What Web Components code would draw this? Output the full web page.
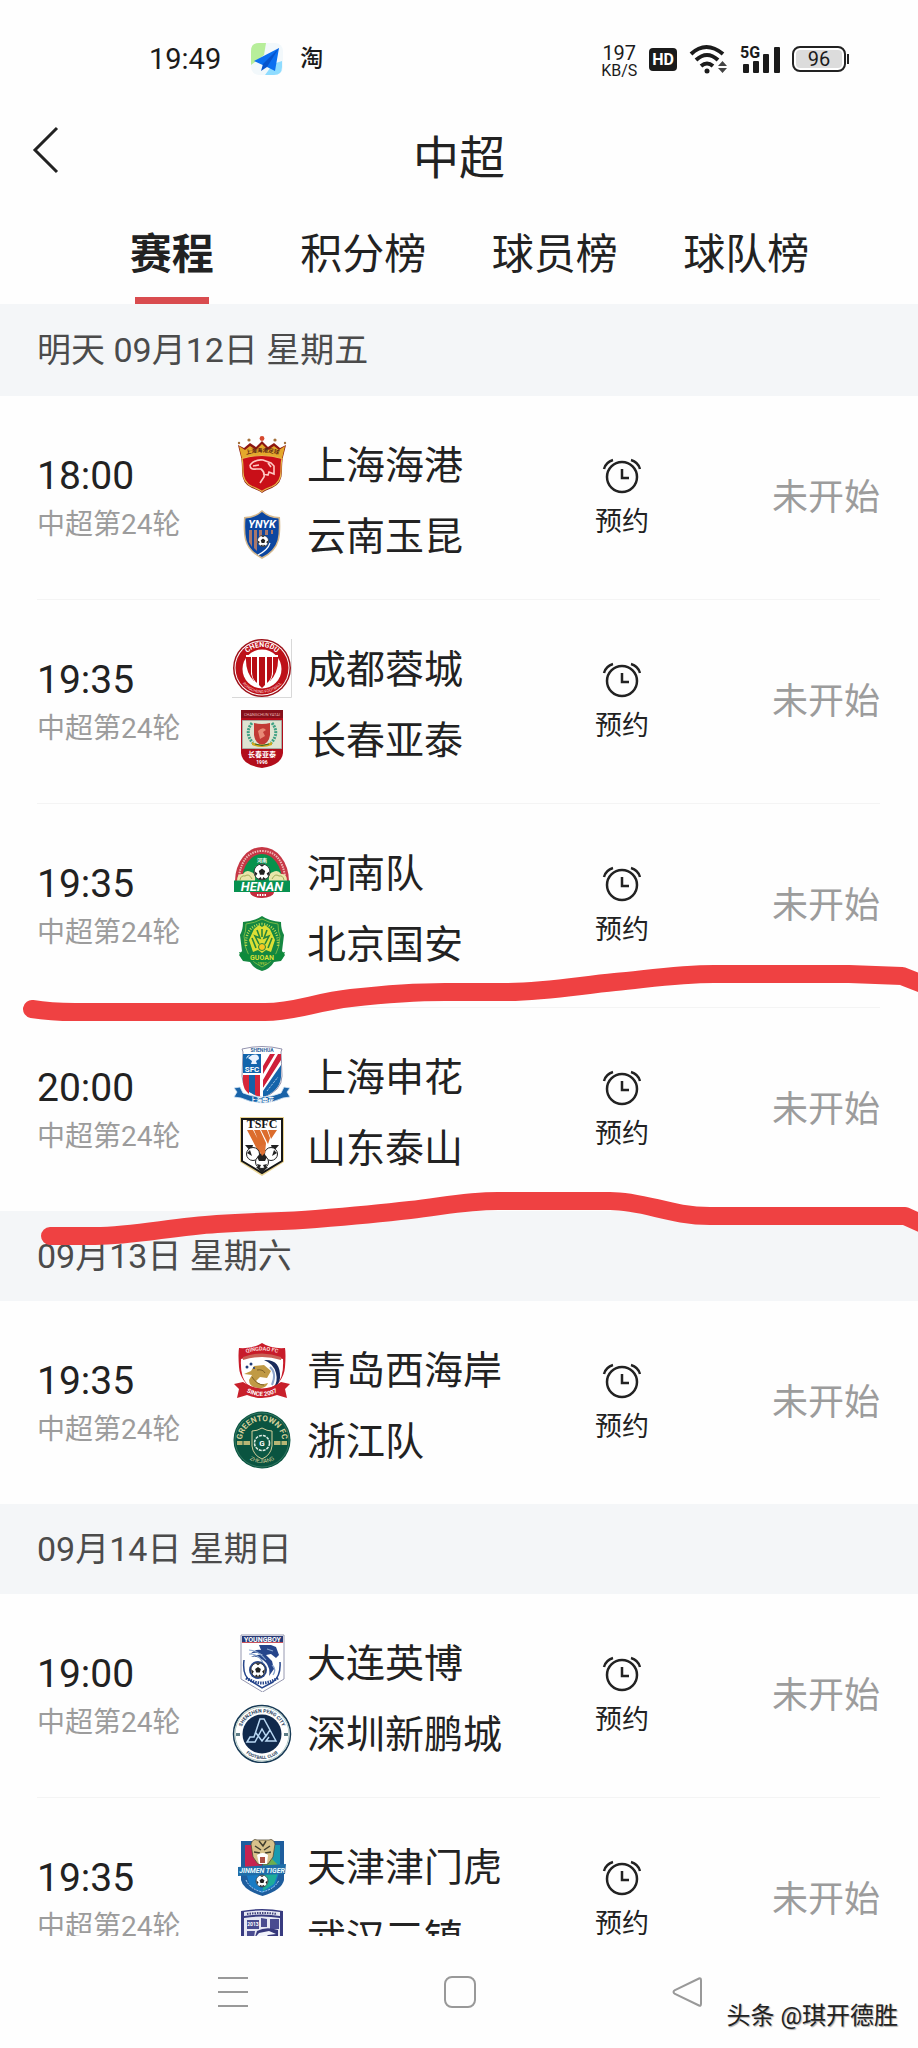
<!DOCTYPE html>
<html lang="zh-CN">
<head>
<meta charset="utf-8">
<meta name="viewport" content="width=device-width, initial-scale=1">
<title>中超</title>
<style>
  body {
    margin: 0;
    background: #fefefe;
    color: #222;
    font-family: Roboto, "Noto Sans CJK SC", sans-serif;
  }
</style>
</head>
<body>
<league-screen>
  <status-bar slot="top" time="19:49" speed="197" battery="96"></status-bar>
  <page-header slot="top">中超</page-header>
  <tab-bar slot="top">
    <tab-item active>赛程</tab-item>
    <tab-item>积分榜</tab-item>
    <tab-item>球员榜</tab-item>
    <tab-item>球队榜</tab-item>
  </tab-bar>

  <match-day date="明天 09月12日 星期五" next>
    <match-row time="18:00" round="中超第24轮">
      <team-line crest="haigang">上海海港</team-line>
      <team-line crest="yukun">云南玉昆</team-line>
    </match-row>
    <match-row time="19:35" round="中超第24轮">
      <team-line crest="chengdu">成都蓉城</team-line>
      <team-line crest="yatai">长春亚泰</team-line>
    </match-row>
    <match-row time="19:35" round="中超第24轮">
      <team-line crest="henan">河南队</team-line>
      <team-line crest="guoan">北京国安</team-line>
    </match-row>
    <match-row time="20:00" round="中超第24轮">
      <team-line crest="shenhua">上海申花</team-line>
      <team-line crest="taishan">山东泰山</team-line>
    </match-row>
  </match-day>
  <match-day date="09月13日 星期六">
    <match-row time="19:35" round="中超第24轮">
      <team-line crest="qingdao">青岛西海岸</team-line>
      <team-line crest="zhejiang">浙江队</team-line>
    </match-row>
  </match-day>
  <match-day date="09月14日 星期日">
    <match-row time="19:00" round="中超第24轮">
      <team-line crest="dalian">大连英博</team-line>
      <team-line crest="shenzhen">深圳新鹏城</team-line>
    </match-row>
    <match-row time="19:35" round="中超第24轮">
      <team-line crest="tianjin">天津津门虎</team-line>
      <team-line crest="wuhan">武汉三镇</team-line>
    </match-row>
  </match-day>

  <nav-bar slot="bottom">头条 @琪开德胜</nav-bar>
  <pen-marks slot="over"></pen-marks>
</league-screen>

<script>
// club crests, all on a 60x60 grid
const BALL = `<circle r="8" fill="#fff" stroke="#222" stroke-width=".8"/>
  <path d="M0-3.4 3.2-1 2 2.8H-2L-3.2-1ZM-3-7.4H3L0-5.2ZM7.8-1 6.4 4.4 4.6 1.6ZM-7.8-1-6.4 4.4-4.6 1.6ZM-4 7-1.2 5 0 8ZM4 7 1.2 5 0 8Z" fill="#222"/>`;

const CRESTS = {
  haigang: `
    <circle cx="30" cy="4.500" r="2.400" fill="#d6492f"/>
    <g fill="#a3703a"><circle cx="17" cy="6" r="1.600"/><circle cx="43" cy="6" r="1.600"/><circle cx="7" cy="9" r="1.200"/><circle cx="53" cy="9" r="1.200"/></g>
    <path d="M6 11l6 3 6-5 6 4 6-6 6 6 6-4 6 5 6-3-3 12q-1 5-1 14 0 13-10 17-8 3-10 5-2-2-10-5-10-4-10-17 0-9-1-14z" fill="#8c1712"/>
    <path d="M7 12l6 4 5-4 6 4 6-6 6 6 6-4 5 4 6-4-3 13Q30 18 10 25z" fill="#e4a92c"/>
    <path d="M10 24.500Q30 18.500 50 24.500q-1 4-1 13 0 11-9 15-8 3-10 5-2-2-10-5-9-4-9-15 0-9-1-13z" fill="#c90f18" stroke="#e5b84c" stroke-width="1.200"/>
    <path id="h" d="M11 21.500Q30 15 50 21.500" fill="none"/>
    <text font-size="5.500" font-weight="700" fill="#5c2410" text-anchor="middle"><textPath href="#h" startOffset="50%">上海海港足球</textPath></text>
    <path d="M18 31q5-6 13-5l8 3 3 3v8l-5-2-1 3-5-1M18 31q0 5 6 4h5q4 3 3 8l-4 6M21 32l6-1M36 29l3 4" fill="none" stroke="#ffc9c4" stroke-width="1.600"/>`,
  yukun: `
    <path d="M30 5q7 7 18 7 1 15-1 23-3 12-17 19-14-7-17-19-2-8-1-23 11 0 18-7z" fill="#d5b88c"/>
    <path d="M30 7q7 6 16.500 6.500 1 14-1 21.500-3 11-15.500 17-12.500-6-15.500-17-2-7.500-1-21.500Q23 13 30 7z" fill="#0c46a0"/>
    <path d="M17 25h3v17l-3-5zM22 25h3v21l-3-3zM27 25h3v9h-3zM33 25h3v5h-3zM39 25h2v4h-2z" fill="#a9786b"/>
    <text x="30" y="23" font-size="11" font-weight="700" font-style="italic" fill="#fff" text-anchor="middle">YNYK</text>
    <g transform="translate(31 36) scale(.7)">${BALL}</g>
    <path d="M38 38q-2 7-12 12" stroke="#fff" stroke-width="1.200" fill="none"/>`,
  chengdu: `
    <path d="M59.500 1V59.500H0" fill="none" stroke="#d8d8d8"/>
    <circle cx="30" cy="30" r="29" fill="#9c1018"/><circle cx="30" cy="30" r="27.500" fill="#fff"/><circle cx="30" cy="30" r="26.500" fill="#bd1119"/>
    <circle cx="30" cy="31" r="19.500" fill="#fff"/>
    <path d="M14 18q-1 16 8 25V18zM46 18q1 16-8 25V18z" fill="#bd1119"/>
    <path d="M19 17h22v19q-2 9-11 13-9-4-11-13z" fill="#fff"/>
    <path d="M20 17h5v28q-5-4-5-11zM27 17h6v30l-3 3-3-3zM35 17h5v17q0 7-5 11z" fill="#b80d15"/>
    <path d="M14 18h32" stroke="#fff" stroke-width="2"/>
    <path id="c" d="M9 30A21 21 0 0 1 51 30" fill="none"/><path id="d" d="M5 30A25 25 0 0 0 55 30" fill="none"/>
    <text font-size="7" font-weight="700" fill="#fff" text-anchor="middle"><textPath href="#c" startOffset="50%">CHENGDU</textPath></text>
    <text font-size="4" fill="#ffd9d9" text-anchor="middle"><textPath href="#d" startOffset="50%">RONGCHENG FOOTBALL</textPath></text>`,
  yatai: `
    <path d="M9 1h42v43q-1 12-21 15Q10 56 9 44z" fill="#b20d1b"/>
    <path d="M9 1h42v8H9z" fill="#85101b"/>
    <text x="30" y="6.500" font-size="4" fill="#eab4b4" text-anchor="middle">CHANGCHUN YATAI</text>
    <path d="M10.500 11.500h39v28h-39z" fill="#dfe4d2" stroke="#a9aaa2"/>
    <path d="M22 14q8 2 16 0v12q-1 8-8 10-7-2-8-10z" fill="#c23a35"/>
    <path d="M26 22q5-5 8-1l-3 2 2 4-5 3" fill="#e88a76"/>
    <path d="M20 14q-8 10 1 20M40 14q8 10-1 20" fill="none" stroke="#3fa184" stroke-width="3" stroke-dasharray="2 1"/>
    <path d="M20 33q10 5 20 0v3q-10 4-20 0z" fill="#cda91d"/><path d="M23 35q7 3 14 0" stroke="#35632d" fill="none"/>
    <text x="30" y="47.500" font-size="7" font-weight="700" fill="#fff" text-anchor="middle">长春亚泰</text>
    <text x="30" y="54.500" font-size="5" font-weight="700" fill="#fff" text-anchor="middle">1996</text>`,
  henan: `
    <ellipse cx="30" cy="50" rx="12" ry="6" fill="#c52b3c"/>
    <path d="M3 39a27 34 0 0 1 54 0z" fill="#c63745"/>
    <path d="M10 39a20 27 0 0 1 40 0z" fill="#07924c"/>
    <path d="M7 34q4-25 23-25t23 25" fill="none" stroke="#efb6b6" stroke-width="2" stroke-dasharray="1.5 1"/>
    <text x="30" y="20" font-size="5" font-weight="700" fill="#fff" text-anchor="middle">河南</text>
    <path d="M5 39q0-8 6-7 3-5 8-2 5 1 4 9zM55 39q0-8-6-7-3-5-8-2-5 1-4 9z" fill="#e9e6aa"/>
    <path d="M8 38q1-5 5-4 4-3 7 3M52 38q-1-5-5-4-4-3-7 3" fill="none" stroke="#a0ab57"/>
    <g transform="translate(30 30)">${BALL}</g>
    <path d="M2 38.500h56V50H2z" fill="#079150"/>
    <text x="30" y="49" font-size="13" font-weight="700" font-style="italic" fill="#fff" text-anchor="middle">HENAN</text>
    <path d="M25 53h10" stroke="#fff" stroke-width="2" stroke-dasharray="1.5 1"/>`,
  guoan: `
    <path d="M30 3q7 5 19 6 0 8 3 13l-2 16 3 4-4 6-7 1q-4 7-12 9-8-2-12-9l-7-1-4-6 3-4-2-16q3-5 3-13 12-1 19-6z" fill="#158741"/>
    <path d="M30 6q7 4 16 5 0 8 2 12-1 24-18 31-17-7-18-31 2-4 2-12 9-1 16-5z" fill="none" stroke="#73b946"/>
    <path d="M22 16l5-4 3 2 3-2 5 4 5 11-4 12-5-2-4 3-4-3-5 2-4-12z" fill="#dcdf35"/>
    <path d="M25 17l3 8-5-2 4 8M35 17l-3 8 5-2-4 8M30 16v8M20 25l4 10M40 25l-4 10" fill="none" stroke="#27863c" stroke-width="1.600"/>
    <circle cx="30" cy="34" r="3.500" fill="#f5c623" stroke="#27863c"/>
    <path d="M14 33q-1-20 16-22 17 2 16 22" fill="none" stroke="#b9d850" stroke-width="2.500" stroke-dasharray="1 1.500"/>
    <path d="M7 39l9 2q14 5 28 0l9-2-3 7-7 1q-13 4-26 0l-7-1z" fill="#0d8a3b"/>
    <text x="30" y="46.500" font-size="7" font-weight="700" fill="#d9df37" text-anchor="middle">GUOAN</text>
    <text x="30" y="52" font-size="4" fill="#d9df37" text-anchor="middle">1992</text>`,
  shenhua: `
    <path d="M10 3q20-5 40 0l-1 3 1 24q0 15-20 22-20-7-20-22L11 6z" fill="#fff" stroke="#779" stroke-width=".8"/>
    <text x="30" y="6" font-size="5" font-weight="700" fill="#2c5f98" text-anchor="middle">SHENHUA</text>
    <path d="M11 8h18v19H11z" fill="#1264ac"/>
    <path d="M20 9q7-2 7 4l-3 2 1 3h-6l1-3-4-3zM14 13q1-4 4-4" fill="#e9f3ff"/>
    <text x="20" y="26" font-size="8" font-weight="700" fill="#fff" text-anchor="middle">SFC</text>
    <path d="M11 29h6v19q-6-5-6-12zM23 29h5v22l-5-2z" fill="#d7263a"/><path d="M17 29h6v20l-6-3z" fill="#1561a8"/>
    <path d="M31 20 38 8h5L31 28zM31 34 46 8h3v6L31 42z" fill="#cf2039"/>
    <path d="M31 51v-6l18-26v12q-1 14-18 20z" fill="#1564aa"/>
    <path d="M31 43 49 17" stroke="#fff"/>
    <path d="M35 45 46 31" stroke="#d9e9f6" stroke-dasharray="1 1"/>
    <path d="M2 42l6-1 3 6q19 8 38 0l3-6 6 1-3 4 3 5-7 1q-21 10-42 0l-7-1 3-5z" fill="#1963a8" stroke="#d5e6f5" stroke-width=".8"/>
    <text x="30" y="56" font-size="6" font-weight="700" fill="#fff" text-anchor="middle">上海申花</text>`,
  taishan: `
    <path d="M8 0h44v45L30 59 8 45z" fill="#e9d391"/>
    <path d="M10 2h40v42L30 56 10 44z" fill="#fff" stroke="#171717" stroke-width="2"/>
    <text x="30" y="11" font-family="Liberation Serif" font-size="12" font-weight="700" fill="#161616" text-anchor="middle">TSFC</text>
    <path d="M15 13h6l9 17-2 8zM22 13h6l6 13-3 9zM29 13h6l3 8-2 6zM36 13h9l-6 9z" fill="#dc6d2d"/>
    <path d="M13 28h8l-2 7zM47 28h-8l2 7zM30 56l-6-6h12z" fill="#222"/>
    <g fill="#fff" stroke="#222"><circle cx="21" cy="37" r="6.500"/><circle cx="39" cy="37" r="6.500"/><circle cx="30" cy="45" r="6.500"/></g>
    <path d="M30 35l5 5-2 4h-6l-2-4zM15 36l3-3 2 6zM45 36l-3-3-2 6zM25 47l4 1-2 4zM35 47l-4 1 2 4z" fill="#222"/>
    <path d="M26 30l8-4-1 10-3 3z" fill="#df7134"/>`,
  qingdao: `
    <path d="M7 9q14 1 23-5 9 6 23 5 1 6 0 19-1 17-23 28Q8 45 7 28 6 15 7 9z" fill="#c81c2a"/>
    <path d="M9 20q21-6 42 0 1 18-6 25l-15 9-15-9Q8 38 9 20z" fill="#fff"/>
    <path id="q" d="M10 15.500q20-8 40 0" fill="none"/>
    <text font-size="5.500" font-weight="700" fill="#ffdede" text-anchor="middle"><textPath href="#q" startOffset="50%">QINGDAO FC</textPath></text>
    <path d="M11 18q19-7 38 0v3q-19-6-38 0z" fill="#c96055"/>
    <path d="M32 21q17-1 16 18-1 7-6 9 4-6 2-14-2-9-12-13z" fill="#192c5d"/>
    <path d="M38 28q7 6 2 18" stroke="#8ea5cc" stroke-width="2" fill="none"/>
    <path d="M12 35l7-3 3-5 10-1 7 6-4 7-7-1-4 4q4 5 12 2-2 6-10 5-9-1-9-8l3-5z" fill="#c09a45"/>
    <path d="M25 31q6-1 8 3M20 38q5 8 12 8" fill="none" stroke="#7e6128"/>
    <circle cx="19" cy="25" r="1.500" fill="#203b78"/><circle cx="15" cy="28" r="1.500" fill="#203b78"/><circle cx="22" cy="29" r="1" fill="#203b78"/>
    <path d="M2 45l9-2q19 13 38 0l9 2-5 5 2 9-10-3q-15 6-30 0L5 59l2-9z" fill="#c8202b"/>
    <path id="r" d="M11 51q19 12 38 0" fill="none"/>
    <text font-size="6" font-weight="700" fill="#fff" text-anchor="middle"><textPath href="#r" startOffset="50%">SINCE 2007</textPath></text>`,
  zhejiang: `
    <circle cx="30" cy="30" r="28.500" fill="#0a5440"/><circle cx="30" cy="30" r="27" fill="none" stroke="#4e8c75" stroke-width=".6"/>
    <path id="z" d="M10 31A20 20 0 0 1 50 31" fill="none"/><path id="y" d="M7 30A23 23 0 0 0 53 30" fill="none"/>
    <text font-size="8" font-weight="700" fill="#d5cf9a" text-anchor="middle"><textPath href="#z" startOffset="50%">GREENTOWN FC</textPath></text>
    <text font-size="5.500" fill="#d5cf9a" text-anchor="middle"><textPath href="#y" startOffset="50%">ZHEJIANG</textPath></text>
    <path d="M5 31h13v4H5zM42 31h13v4H42z" fill="#b7b574"/><path d="M11 31v4M49 31v4" stroke="#0a5440"/>
    <path d="M20 21q5 0 10-3 5 3 10 3v15q-1 9-10 13-9-4-10-13z" fill="#0d5945" stroke="#d5cf9a"/>
    <circle cx="30" cy="33" r="7.500" fill="none" stroke="#e0eee5" stroke-width="1.500" stroke-dasharray="3 1"/>
    <text x="30" y="36" font-size="8" font-weight="700" fill="#fff" text-anchor="middle">G</text>`,
  dalian: `
    <path d="M9 3h43v44L30.500 60 9 47z" fill="#fff" stroke="#9698b0"/>
    <path d="M10 4h41v6H10z" fill="#273a78"/><path d="M10 10h41v1H10z" fill="#c8525c"/>
    <text x="30.500" y="9.500" font-size="7" font-weight="700" fill="#fff" text-anchor="middle">YOUNGBOY</text>
    <path d="M27 13l12 0 5 2 3 8-3 3-5-4-5 1 6 6 2 8-5 7q2-10-6-16-6-5-12-3 5-3 12-2-6-4-13-1 5-5 11-4z" fill="#26458b"/>
    <path d="M17 18q9 0 17 10M17 22q10 0 14 9M35 17l6 2M40 33q5 4 1 10" stroke="#88a4ce" stroke-width="1.200" fill="none"/>
    <circle cx="26" cy="38" r="9" fill="#26458b"/><g transform="translate(26 38) scale(.9)">${BALL}</g>
    <path d="M12 28q-2 16 7 21l11 7 11-6q8-6 7-20" fill="none" stroke="#26458b" stroke-width="1.500"/>
    <path d="M14 46q16 10 32 0" fill="none" stroke="#26458b" stroke-width="3" stroke-dasharray="1.500 1"/>`,
  shenzhen: `
    <circle cx="30" cy="31" r="28.500" fill="#fff" stroke="#173a55" stroke-width="1.500"/><circle cx="30" cy="31" r="27" fill="none" stroke="#9bb9b4" stroke-width=".8"/>
    <circle cx="30" cy="31" r="19.500" fill="#10294c"/>
    <path id="s" d="M8.500 31A21.500 21.500 0 0 1 51.500 31" fill="none"/><path id="t" d="M5 31A25 25 0 0 0 55 31" fill="none"/>
    <text font-size="5" font-weight="700" fill="#26405c" text-anchor="middle"><textPath href="#s" startOffset="50%">SHENZHEN PENG CITY</textPath></text>
    <text font-size="4.500" font-weight="700" fill="#26405c" text-anchor="middle"><textPath href="#t" startOffset="50%">FOOTBALL CLUB</textPath></text>
    <path d="M4 30h4v3H4zM52 30h4v3h-4z" fill="#5e7e88"/>
    <path d="M28 16h4l6 11-4 6-4-7-7 13H15l3-5h4zM38 27l6 11H34l3-4M24 30l6 8 6-8" fill="none" stroke="#b9d8f4" stroke-width="1.500"/>`,
  tianjin: `
    <path d="M9 5h43v39q-2 10-21.500 16Q11 54 9 44z" fill="#1e5d9d"/>
    <path d="M13 9h17v22H13z" fill="#c72350"/><path d="M31 9h17v22H31z" fill="#6cae50"/><path d="M40 9h8v22l-9-9z" fill="#179ab1"/>
    <path d="M19 8q2-6 6-4h12q4-2 6 4l-2 13-5 7H26l-5-7z" fill="#d7c28b" stroke="#544b36" stroke-width=".8"/>
    <path d="M23 10l6 4M38 10l-6 4M22 16l6 1M39 16l-6 1M27 5l4 5 3-5" stroke="#403e2e" stroke-width="1.500" fill="none"/>
    <path d="M25 19q6-4 11 0l-1 9h-8z" fill="#fff"/><path d="M28 21h5v6h-5z" fill="#ad5044"/>
    <path d="M14 37h33l-4 13-13 7-12-7z" fill="#187bc5"/><path d="M31 37h15l-4 11-11 7z" fill="#1dac99"/>
    <path d="M6 31l48-3-1 10-47 2z" fill="#1f6da8"/>
    <text x="30" y="37" font-size="7" font-weight="700" font-style="italic" fill="#e9fbff" text-anchor="middle">JINMEN TIGER</text>
    <g transform="translate(30 45) scale(.75)">${BALL}</g>
    <path d="M14 44q4 9 16 12 13-3 17-12" stroke="#b6d8ff" fill="none" stroke-dasharray="2 1"/>`,
  wuhan: `
    <path d="M9 4q21-4 42 0v40q-3 8-21 14Q12 52 9 44z" fill="#383b80"/>
    <path d="M12 5q18-3 36 0v4q-18-3-36 0zM12 11q18-3 36 0v33q-3 6-18 11-15-5-18-11z" fill="#e7e8f3"/>
    <path d="M15 7q15-2 30 0" fill="none" stroke="#44467f" stroke-width="2" stroke-dasharray="1.500 1"/>
    <path d="M15 13h12v9H15zM29 11l6 1v8h-6zM38 12h9v10h-9zM15 24h8l-3 19h-5z" fill="#4a4c90"/>
    <text x="21" y="19" font-size="5" font-weight="700" fill="#fff" text-anchor="middle">2013</text>
    <path d="M25 24q9-5 21-1v14l-7-5-6 4-3-5-9 5z" fill="#37397c"/><path d="M20 34l7-8 10-2 7 3-8 1-4 4-6 1z" fill="#f1f3fb"/>`
};

const nameOf = (el, attr) => el.getAttribute(attr) || '';

class LeagueScreen extends HTMLElement {
  constructor() {
    super();
    this.attachShadow({ mode: 'open' });
    this.shadowRoot.innerHTML = `<style>
      :host {
        position: relative;
        display: flex;
        flex-direction: column;
        height: 100vh;
        overflow: hidden;
      }
      main {
        flex: 1;
        min-height: 0;
        overflow-y: auto;
        scrollbar-width: none;
      }
    </style>
    <slot name="top"></slot>
    <main><slot></slot></main>
    <slot name="bottom"></slot>
    <slot name="over"></slot>`;
  }
}
customElements.define('league-screen', LeagueScreen);

class StatusBar extends HTMLElement {
  constructor() {
    super();
    this.attachShadow({ mode: 'open' });
    this.shadowRoot.innerHTML = `<style>
      :host {
        display: flex;
        align-items: center;
        justify-content: space-between;
        height: 118px;
        padding: 0 70px 0 149px;
        color: #1b1b1b;
      }
      div { display: flex; align-items: center; }
      .left { gap: 30px; }
      .apps { gap: 17px; }
      .right { gap: 12px; }
      svg { display: block; }
      .clock { font-size: 29px; }
      .tao { font-size: 23px; font-weight: 500; line-height: 24px; }
      .net { flex-direction: column; padding-top: 4px; font-size: 20px; line-height: 20px; }
      .net small { font-size: 16px; line-height: 16px; }
      .hd {
        padding: 0 3px;
        border-radius: 4px;
        background: #1b1b1b;
        color: #fff;
        font-size: 16px;
        line-height: 23px;
        font-weight: 700;
      }
      .battery {
        box-sizing: border-box;
        justify-content: center;
        position: relative;
        width: 54px;
        height: 26px;
        margin-right: 2px;
        border: 2px solid #222;
        border-radius: 8px;
        background: #dcdcdc;
        box-shadow: inset 0 0 0 2px #fff;
        font-size: 20px;
      }
      .battery::after {
        content: "";
        position: absolute;
        right: -5px;
        width: 2px;
        height: 10px;
        background: #222;
      }
    </style>
    <div class="left">
      <span class="clock">${nameOf(this, 'time')}</span>
      <div class="apps">
        <svg width="32" height="32" viewBox="0 0 32 32">
          <rect width="32" height="32" rx="8" fill="#f2f8fb"/>
          <path d="M0 22V8q0-8 8-8h7L13 12z" fill="#b7ee9a"/>
          <path d="M14 32 22 21l9-3v6q0 8-8 8z" fill="#8fdcff"/>
          <path d="M3 18 28 5 24 28l-8-4z" fill="#0b6ff0"/><path d="M16 24 28 5 12 21l-2 7z" fill="#0753cc"/>
        </svg>
        <span class="tao">淘</span>
      </div>
    </div>
    <div class="right">
      <div class="net"><span>${nameOf(this, 'speed')}</span><small>KB/S</small></div>
      <span class="hd">HD</span>
      <svg width="39" height="30" viewBox="0 0 39 30" fill="none" stroke="#1b1b1b" stroke-width="4">
        <path d="M2 10q15-14 32 0M7 16q11-10 22 0M12 22q6-5 12 0"/>
        <circle cx="18" cy="27" r="2.500" fill="#1b1b1b" stroke="none"/>
        <path d="M29 22h9l-4.500-5zM29 24h9l-4.500 5z" fill="#444" stroke="none"/>
      </svg>
      <svg width="40" height="30" viewBox="0 0 40 30" fill="#1b1b1b">
        <text x="0" y="14" font-size="16" font-weight="700">5G</text>
        <rect x="3" y="20" width="6" height="9" rx="1"/><rect x="13" y="17" width="6" height="12" rx="1"/>
        <rect x="23" y="10" width="6" height="19" rx="1"/><rect x="34" y="3" width="6" height="26" rx="1"/>
      </svg>
      <div class="battery">${nameOf(this, 'battery')}</div>
    </div>`;
  }
}
customElements.define('status-bar', StatusBar);

class PageHeader extends HTMLElement {
  constructor() {
    super();
    this.attachShadow({ mode: 'open' });
    this.shadowRoot.innerHTML = `<style>
      :host {
        display: grid;
        grid-template-columns: 1fr auto 1fr;
        align-items: center;
        height: 78px;
        padding: 0 32px;
      }
      button {
        align-self: start;
        justify-self: start;
        margin: 8px 0 0;
        padding: 0;
        border: 0;
        background: none;
        color: inherit;
      }
      svg { display: block; }
      h1 { margin: 0; padding-top: 2px; font-size: 46px; line-height: 66px; font-weight: 400; }
    </style>
    <button type="button" aria-label="返回">
      <svg width="28" height="48" viewBox="0 0 28 48"><path d="M25 2 3 24 25 46" fill="none" stroke="currentColor" stroke-width="3"/></svg>
    </button>
    <h1><slot></slot></h1>`;
  }
}
customElements.define('page-header', PageHeader);

class TabBar extends HTMLElement {
  constructor() {
    super();
    this.attachShadow({ mode: 'open' });
    this.shadowRoot.innerHTML = `<style>
      :host { display: flex; height: 108px; padding: 0 76px; }
      ::slotted(tab-item) { flex: 1; }
    </style>
    <slot></slot>`;
  }
}
customElements.define('tab-bar', TabBar);

class TabItem extends HTMLElement {
  constructor() {
    super();
    this.attachShadow({ mode: 'open' });
    this.shadowRoot.innerHTML = `<style>
      :host { display: flex; }
      a {
        flex: 1;
        display: flex;
        flex-direction: column;
        align-items: center;
        justify-content: space-between;
        padding-top: 29px;
        color: inherit;
        font-size: 42px;
        line-height: 60px;
        text-decoration: none;
      }
      i { width: 74px; height: 7px; }
      :host([active]) a { font-weight: 700; }
      :host([active]) i { background: #d94c4f; }
    </style>
    <a href="#"><slot></slot><i></i></a>`;
  }
}
customElements.define('tab-item', TabItem);

class MatchDay extends HTMLElement {
  constructor() {
    super();
    this.attachShadow({ mode: 'open' });
    this.shadowRoot.innerHTML = `<style>
      :host { display: block; }
      h2 {
        margin: 0;
        padding: 0 37px;
        background: #f4f6f8;
        color: #4b4b4b;
        font-size: 34px;
        line-height: 90px;
        font-weight: 400;
      }
      :host([next]) h2 { line-height: 92px; }
      ::slotted(match-row:not(:first-child)) { border-top: 1px solid #f4f4f4; }
    </style>
    <h2>${nameOf(this, 'date')}</h2>
    <slot></slot>`;
  }
}
customElements.define('match-day', MatchDay);

class MatchRow extends HTMLElement {
  constructor() {
    super();
    this.attachShadow({ mode: 'open' });
    this.shadowRoot.innerHTML = `<style>
      :host {
        display: grid;
        grid-template-columns: 195px 1fr 120px 198px;
        align-items: center;
        height: 203px;
        margin: 0 38px 0 37px;
      }
      time { display: block; font-size: 39px; line-height: 44px; }
      small { display: block; margin-top: 8px; color: #9c9c9c; font-size: 28px; line-height: 38px; }
      div { padding-top: 2px; }
      .teams { display: grid; gap: 11px; padding-top: 4px; }
      button {
        justify-self: center;
        padding: 0;
        border: 0;
        background: none;
        color: inherit;
        font: inherit;
        font-size: 27px;
        line-height: 32px;
      }
      svg { display: block; margin: 0 auto 11px; }
      .state { color: #9c9c9c; font-size: 36px; line-height: 52px; text-align: right; }
    </style>
    <div><time>${nameOf(this, 'time')}</time><small>${nameOf(this, 'round')}</small></div>
    <div class="teams"><slot></slot></div>
    <button type="button">
      <svg width="40" height="38" viewBox="0 0 40 38" fill="none" stroke="currentColor" stroke-width="2.500">
        <circle cx="20" cy="20" r="15"/><path d="M20 12v9h7M2 12q2-7 9-9M38 12q-2-7-9-9"/>
      </svg>预约</button>
    <span class="state">未开始</span>`;
  }
}
customElements.define('match-row', MatchRow);

class TeamLine extends HTMLElement {
  constructor() {
    super();
    this.attachShadow({ mode: 'open' });
    this.shadowRoot.innerHTML = `<style>
      :host {
        display: flex;
        align-items: center;
        gap: 15px;
        font-size: 39px;
        line-height: 60px;
        white-space: nowrap;
      }
      svg { flex: none; }
      span { padding-top: 2px; margin-bottom: -2px; }
    </style>
    <svg width="60" height="60" viewBox="0 0 60 60" aria-hidden="true">${CRESTS[this.getAttribute('crest')]}</svg>
    <span><slot></slot></span>`;
  }
}
customElements.define('team-line', TeamLine);

class NavBar extends HTMLElement {
  constructor() {
    super();
    this.attachShadow({ mode: 'open' });
    this.shadowRoot.innerHTML = `<style>
      :host {
        position: relative;
        display: flex;
        align-items: center;
        justify-content: space-around;
        height: 112px;
        padding: 0 118px 0 120px;
        background: #fefefe;
      }
      button { padding: 0; border: 0; background: none; color: #999; }
      svg { display: block; }
      /* watermark lies over the corner of the bar */
      span {
        position: absolute;
        right: 20px;
        bottom: 16px;
        color: #222;
        font-size: 24px;
        line-height: 32px;
        text-shadow: 1px 1px 1px #aaa;
      }
    </style>
    <button type="button" aria-label="菜单"><svg width="32" height="32" viewBox="0 0 32 32"><path d="M1 2h30M1 16h30M1 30h30" stroke="currentColor" stroke-width="2"/></svg></button>
    <button type="button" aria-label="主页"><svg width="32" height="32" viewBox="0 0 32 32"><rect x="1" y="1" width="30" height="30" rx="7" fill="none" stroke="currentColor" stroke-width="2"/></svg></button>
    <button type="button" aria-label="后退"><svg width="32" height="32" viewBox="0 0 32 32"><path d="M28 2.500 4 14q-3 2 0 4l24 11.500q2 1 2-2v-23q0-3-2-2z" fill="none" stroke="currentColor" stroke-width="2"/></svg></button>
    <span><slot></slot></span>`;
  }
}
customElements.define('nav-bar', NavBar);

class PenMarks extends HTMLElement {
  constructor() {
    super();
    this.attachShadow({ mode: 'open' });
    // two hand-drawn strokes round the fourth match
    this.shadowRoot.innerHTML = `<style>
      :host { position: absolute; inset: 0; pointer-events: none; }
      svg { display: block; width: 100%; height: 100%; }
    </style>
    <svg viewBox="0 0 918 2048" preserveAspectRatio="none" fill="none" stroke="#ef4142" stroke-width="18" stroke-linecap="round" stroke-linejoin="round">
      <path d="M32 1009Q50 1012 75 1012H265C295 1012 315 1002 351 998S410 992 445 992H503C545 992 575 986 615 982S680 974 714 974H849L902 976 925 985"/>
      <path d="M50 1236H95C135 1236 170 1227 217 1224S280 1222 316 1219 375 1214 410 1210 465 1201 498 1201H610C645 1201 670 1216 710 1216H905L925 1225"/>
    </svg>`;
  }
}
customElements.define('pen-marks', PenMarks);
</script>
</body>
</html>
